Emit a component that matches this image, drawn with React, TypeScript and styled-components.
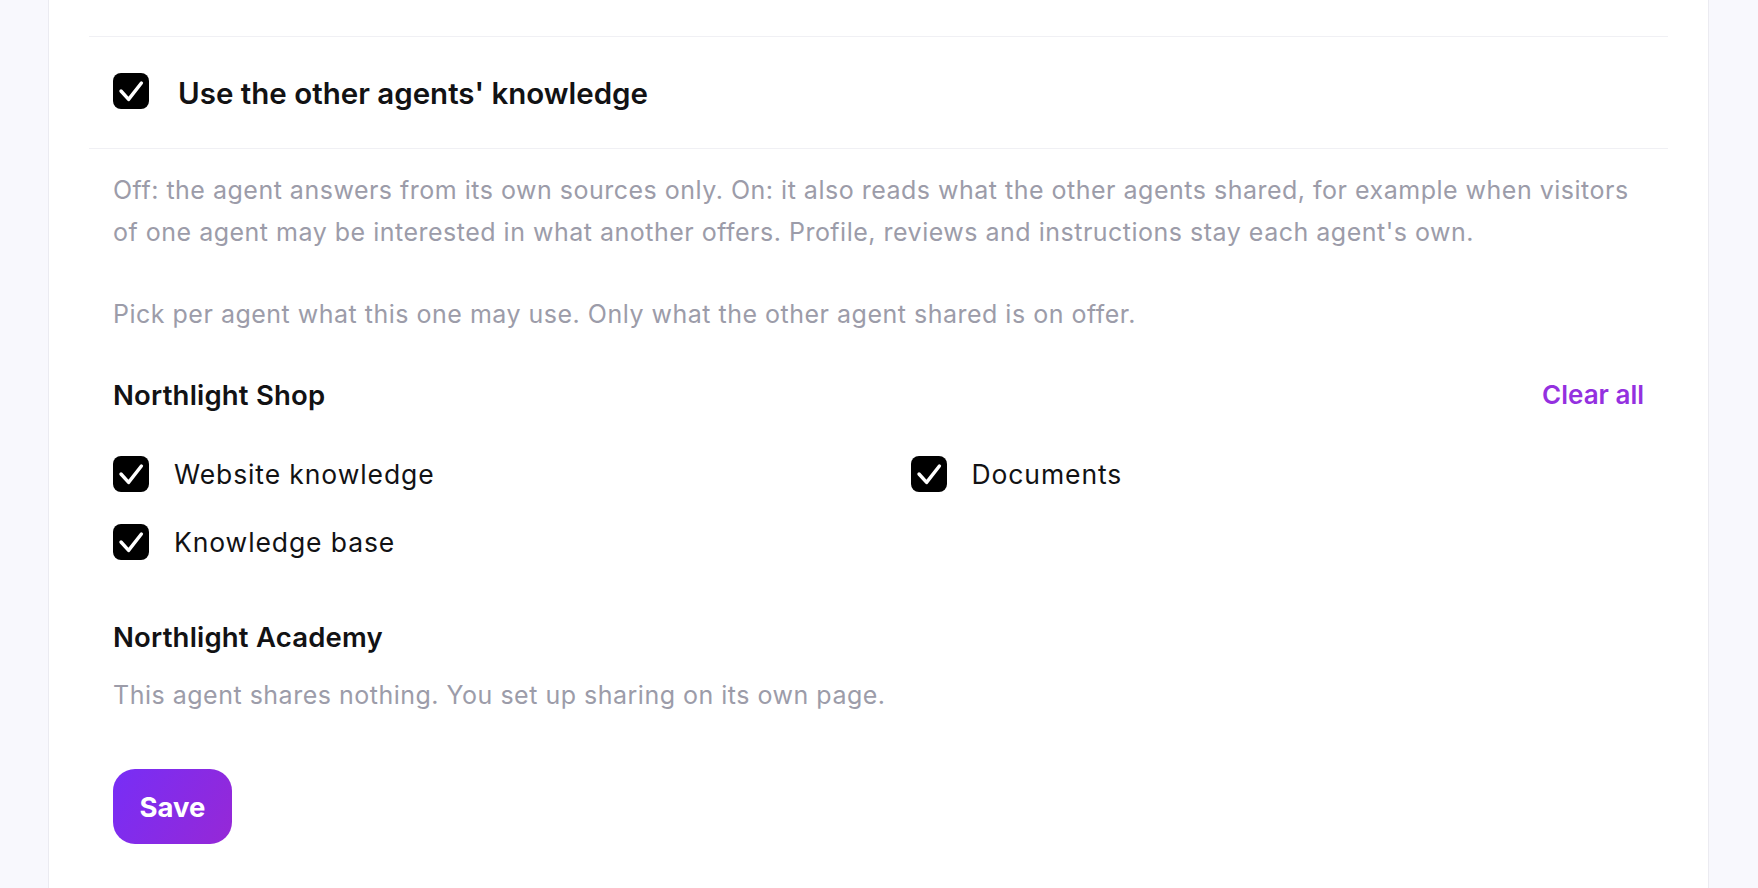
import React, { useState } from 'react';
import styled, { createGlobalStyle } from 'styled-components';

// Types
interface Source {
  id: string;
  label: string;
}

interface Agent {
  id: string;
  name: string;
  sources: Source[];
}

const agents: Agent[] = [
  {
    id: 'shop',
    name: 'Northlight Shop',
    sources: [
      { id: 'website', label: 'Website knowledge' },
      { id: 'documents', label: 'Documents' },
      { id: 'kb', label: 'Knowledge base' },
    ],
  },
  { id: 'academy', name: 'Northlight Academy', sources: [] },
];

// Styled Components
const GlobalStyle = createGlobalStyle`
  body {
    margin: 0;
    background: #f8f8fd;
    font-family: Inter, "Noto Sans", "Liberation Sans", sans-serif;
    color: #121214;
  }
`;

const Page = styled.div`
  min-height: 100vh;
  padding-left: 48px;
  overflow: hidden;
`;

const Card = styled.section`
  box-sizing: border-box;
  width: 1661px;
  min-height: 100vh;
  background: #ffffff;
  border-left: 1px solid #ebebf1;
  border-right: 1px solid #ebebf1;
  padding: 36px 40px 60px;
`;

const ToggleRow = styled.label`
  display: flex;
  align-items: center;
  gap: 29px;
  padding: 36px 24px 39px;
  border-top: 1px solid #f0f0f4;
  border-bottom: 1px solid #f0f0f4;
  cursor: pointer;
`;

const ToggleTitle = styled.span`
  font-size: 29.5px;
  font-weight: 600;
  line-height: 36px;
  position: relative;
  top: 2px;
`;

const Body = styled.div`
  padding: 0 24px;
`;

const Hint = styled.p<{ gap: number }>`
  margin: ${({ gap }) => gap}px 0 0;
  font-size: 25px;
  line-height: 42px;
  letter-spacing: 0.5px;
  color: #9c9ca9;
`;

const AgentHeader = styled.div<{ gap: number }>`
  display: flex;
  align-items: center;
  justify-content: space-between;
  margin-top: ${({ gap }) => gap}px;
`;

const AgentName = styled.h3`
  margin: 0;
  font-size: 27.5px;
  font-weight: 600;
  line-height: 36px;
  letter-spacing: 0.2px;
`;

const ClearButton = styled.button`
  border: none;
  background: none;
  padding: 0;
  font-family: inherit;
  font-size: 26px;
  font-weight: 600;
  line-height: 36px;
  color: #9430df;
  cursor: pointer;
`;

const SourceGrid = styled.div`
  display: grid;
  grid-template-columns: 1fr 1fr;
  column-gap: 64px;
  row-gap: 32px;
  margin-top: 43px;
`;

const SourceItem = styled.label`
  display: flex;
  align-items: center;
  gap: 25px;
  font-size: 26.5px;
  line-height: 36px;
  letter-spacing: 0.9px;
  cursor: pointer;
`;

const Box = styled.span<{ checked: boolean }>`
  flex: none;
  width: 36px;
  height: 36px;
  border-radius: 8px;
  box-sizing: border-box;
  background: ${({ checked }) => (checked ? '#000000' : '#ffffff')};
  border: ${({ checked }) => (checked ? 'none' : '2px solid #c9c9d3')};
  display: flex;

  svg {
    width: 36px;
    height: 36px;
  }
`;

const SaveButton = styled.button`
  display: block;
  margin-top: 53px;
  width: 119px;
  height: 75px;
  border: none;
  border-radius: 22px;
  background: linear-gradient(120deg, #772ef6 0%, #9628d6 100%);
  color: #ffffff;
  font-family: inherit;
  font-size: 27.5px;
  font-weight: 700;
  cursor: pointer;
`;

const CheckBox: React.FC<{ checked: boolean; onToggle: () => void }> = ({ checked, onToggle }) => (
  <Box checked={checked} role="checkbox" aria-checked={checked} onClick={onToggle}>
    {checked && (
      <svg viewBox="0 0 36 36" fill="none">
        <path
          d="M8 18l7.6 8.4L28.4 10"
          stroke="#ffffff"
          strokeWidth="3.4"
          strokeLinecap="round"
          strokeLinejoin="round"
        />
      </svg>
    )}
  </Box>
);

const App: React.FC = () => {
  const [enabled, setEnabled] = useState(true);
  const [picked, setPicked] = useState<Record<string, boolean>>({
    website: true,
    documents: true,
    kb: true,
  });

  const toggle = (id: string) => setPicked((p) => ({ ...p, [id]: !p[id] }));
  const clearAll = (agent: Agent) =>
    setPicked((p) => {
      const next = { ...p };
      agent.sources.forEach((s) => (next[s.id] = false));
      return next;
    });

  return (
    <>
      <GlobalStyle />
      <Page>
        <Card>
          <ToggleRow>
            <CheckBox checked={enabled} onToggle={() => setEnabled(!enabled)} />
            <ToggleTitle>Use the other agents' knowledge</ToggleTitle>
          </ToggleRow>

          <Body>
            <Hint gap={20}>
              Off: the agent answers from its own sources only. On: it also reads what the other agents
              shared, for example when visitors of one agent may be interested in what another offers.
              Profile, reviews and instructions stay each agent's own.
            </Hint>
            <Hint gap={40}>
              Pick per agent what this one may use. Only what the other agent shared is on offer.
            </Hint>

            {agents.map((agent, i) => (
              <React.Fragment key={agent.id}>
                <AgentHeader gap={i === 0 ? 42 : 59}>
                  <AgentName>{agent.name}</AgentName>
                  {agent.sources.length > 0 && (
                    <ClearButton onClick={() => clearAll(agent)}>Clear all</ClearButton>
                  )}
                </AgentHeader>
                {agent.sources.length > 0 ? (
                  <SourceGrid>
                    {agent.sources.map((s) => (
                      <SourceItem key={s.id}>
                        <CheckBox checked={!!picked[s.id]} onToggle={() => toggle(s.id)} />
                        {s.label}
                      </SourceItem>
                    ))}
                  </SourceGrid>
                ) : (
                  <Hint gap={19}>This agent shares nothing. You set up sharing on its own page.</Hint>
                )}
              </React.Fragment>
            ))}

            <SaveButton>Save</SaveButton>
          </Body>
        </Card>
      </Page>
    </>
  );
};

export default App;
